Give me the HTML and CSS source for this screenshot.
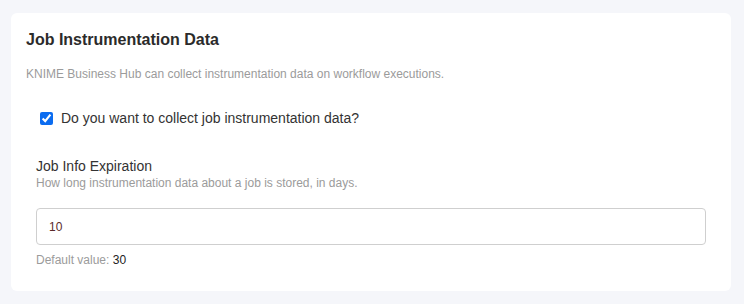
FILE: index.html
```html
<!DOCTYPE html>
<html lang="en">
<head>
    <meta charset="UTF-8">
    <meta name="viewport" content="width=device-width, initial-scale=1.0">
    <title>Job Instrumentation Data</title>
    <link rel="stylesheet" href="styles.css">
</head>
<body>

    <div class="card">
        <h2 class="card-title">Job Instrumentation Data</h2>
        <p class="card-desc">KNIME Business Hub can collect instrumentation data on workflow executions.</p>

        <div class="form">
            <label class="check-row">
                <input type="checkbox" checked>
                <span>Do you want to collect job instrumentation data?</span>
            </label>

            <div class="field">
                <div class="field-label">Job Info Expiration</div>
                <div class="field-help">How long instrumentation data about a job is stored, in days.</div>
                <input class="text-input" type="text" value="10">
                <div class="field-default">Default value: <span>30</span></div>
            </div>
        </div>
    </div>

</body>
</html>
```

FILE: styles.css
```css
body { margin: 0; padding: 13px 13px 13px 11px; background: #f5f6fa; font-family: "Liberation Sans", Arial, sans-serif; color: #333; }
.card { background: #fff; border-radius: 6px; padding: 18px 15px 24px 15px; }
.card-title { margin: 0; font-size: 16px; line-height: 18px; font-weight: bold; color: #2b2b2b; }
.card-desc { margin: 18px 0 0 0; font-size: 12px; line-height: 14px; color: #9b9b9b; }
.form { padding: 0 10px; }
.check-row { display: flex; align-items: center; gap: 8px; margin-top: 29px; font-size: 14px; line-height: 16px; color: #333; }
.check-row input { margin: 0 0 0 4px; width: 13px; height: 13px; accent-color: #0b6cf0; }
.field { margin-top: 32px; }
.field-label { font-size: 14px; line-height: 16px; color: #333; }
.field-help { margin-top: 2px; font-size: 12px; line-height: 14px; color: #9b9b9b; }
.text-input { display: block; box-sizing: border-box; width: 100%; height: 37px; margin-top: 18px; padding: 0 12px; border: 1px solid #cfcfcf; border-radius: 4px; font-family: inherit; font-size: 12px; color: #5a2a2a; background: #fff; }
.field-default { margin-top: 8px; font-size: 12px; line-height: 14px; color: #9b9b9b; }
.field-default span { color: #222; }
```
